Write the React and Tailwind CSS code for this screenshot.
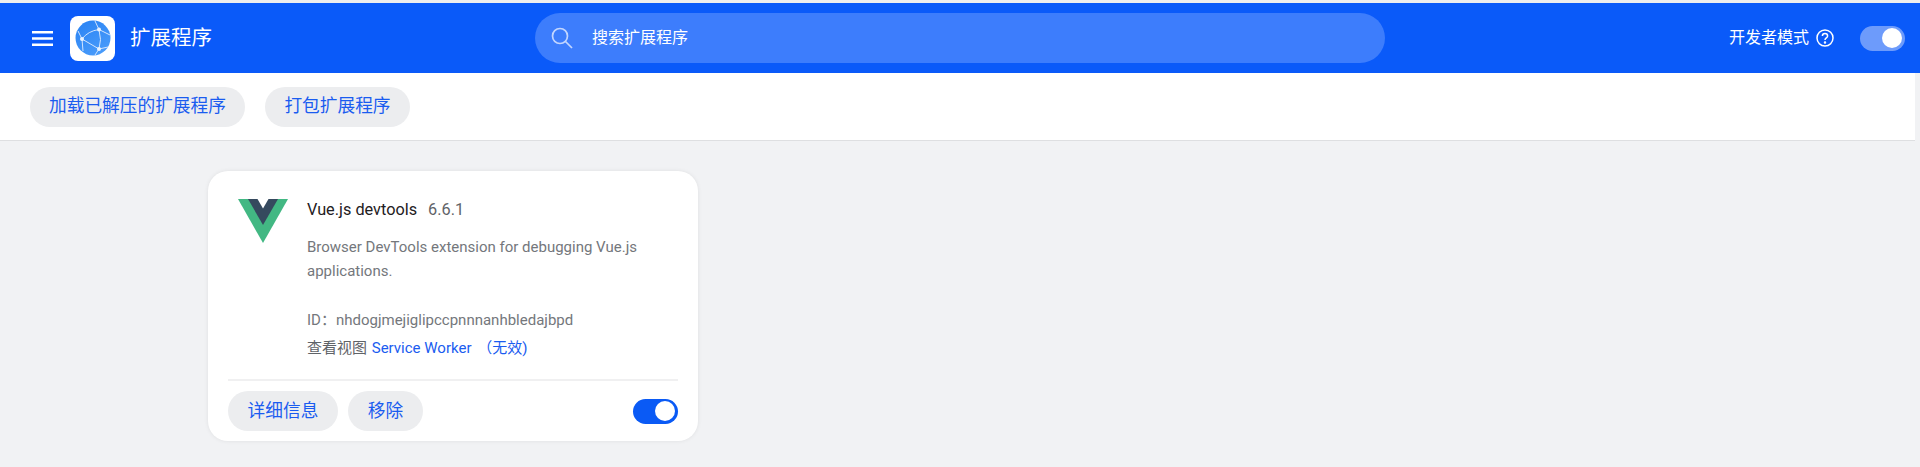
import React from "react";

function Toggle({ dev }) {
  return (
    <div className={`flex h-[25px] w-[45px] items-center justify-end rounded-full pr-[3px] ${dev ? "bg-[#6d9bfb]" : "bg-[#0a5af5]"}`}>
      <div className="h-[20px] w-[20px] rounded-full bg-white" />
    </div>
  );
}

function Pill({ children, className = "" }) {
  return (
    <button className={`flex h-10 items-center justify-center rounded-full bg-[#ecedef] text-[17.7px] text-[#1a5cf0] ${className}`}>
      {children}
    </button>
  );
}

function GlobeLogo() {
  return (
    <div className="flex h-[45px] w-[45px] items-center justify-center rounded-[8px] bg-white">
      <svg width="36" height="36" viewBox="0 0 36 36">
        <defs>
          <linearGradient id="globe" x1="0.2" y1="0" x2="0.8" y2="1">
            <stop offset="0" stopColor="#2b84f4" />
            <stop offset="1" stopColor="#4b9dfb" />
          </linearGradient>
        </defs>
        <circle cx="18" cy="18" r="17.5" fill="url(#globe)" />
        <path d="M7 19 Q13 11 24 9.5 M24 9.5 Q27 20 24 29 M7 19 L24 29 M24 9.5 L20 1 M24 9.5 L35 15 M24 29 L20 35 M24 29 L33 27 M7 19 L3 11 M7 19 L8 31" stroke="#d3e5fd" strokeWidth="1" fill="none" />
        <circle cx="7" cy="19" r="2" fill="#e8f2fe" />
        <circle cx="24" cy="29" r="2" fill="#e8f2fe" />
        <circle cx="24" cy="9.5" r="2" fill="#e8f2fe" />
      </svg>
    </div>
  );
}

export default function App() {
  return (
    <div className="flex h-[467px] flex-col overflow-hidden bg-[#f1f2f4] font-['Roboto','Noto_Sans_CJK_SC',sans-serif]">
      <div className="h-[3px] bg-[#eeeeee]" />
      <header className="flex h-[70px] items-center bg-[#0a5af9] text-white">
        <div className="flex w-[535px] items-center">
          <svg className="ml-[32px]" width="21" height="15" viewBox="0 0 21 15">
            <path d="M0 1.2h21M0 7.5h21M0 13.8h21" stroke="#fff" strokeWidth="2.4" />
          </svg>
          <div className="ml-[17px]"><GlobeLogo /></div>
          <span className="ml-[15px] text-[20.5px]">扩展程序</span>
        </div>
        <div className="flex h-[50px] w-[850px] items-center rounded-full bg-[#3d7dfc]">
          <svg className="ml-[16px]" width="22" height="22" viewBox="0 0 22 22" fill="none" stroke="#c3d6fe" strokeWidth="1.7">
            <circle cx="9" cy="9" r="7.5" />
            <path d="M14.5 14.5L21 21" />
          </svg>
          <span className="ml-[19px] text-[16px]">搜索扩展程序</span>
        </div>
        <div className="ml-auto flex items-center">
          <span className="text-[16px]">开发者模式</span>
          <svg className="ml-[7px]" width="18" height="18" viewBox="0 0 18 18" fill="none" stroke="#fff" strokeWidth="1.5">
            <circle cx="9" cy="9" r="8" />
            <path d="M6.4 7.1c0-1.5 1.2-2.5 2.6-2.5s2.6 1 2.6 2.3c0 2-2.6 2-2.6 4.2" />
            <circle cx="9" cy="13.6" r="0.5" fill="#fff" />
          </svg>
          <div className="mr-[15px] ml-[26px]"><Toggle dev /></div>
        </div>
      </header>
      <div className="mr-[5px] flex h-[68px] items-center gap-5 border-b border-[#dedfe1] bg-white pl-[30px]">
        <Pill className="w-[215px]">加载已解压的扩展程序</Pill>
        <Pill className="w-[145px]">打包扩展程序</Pill>
      </div>
      <main className="pt-[30px] pl-[208px]">
        <div className="flex h-[270px] w-[490px] flex-col rounded-[20px] bg-white px-5 shadow-[0_0_4px_rgba(0,0,0,0.08)]">
          <div className="flex flex-1">
            <svg className="mt-[28px] ml-[10px]" width="50" height="44" viewBox="0 0 50 44">
              <path d="M0 0H50L25 44Z" fill="#42b883" />
              <path d="M10 0H40L25 26Z" fill="#35495e" />
              <path d="M19.5 0H30.5L25 9.5Z" fill="#fff" />
            </svg>
            <div className="ml-[19px] flex-1">
              <div className="mt-[28px] flex items-center text-[16.3px] leading-[22px]">
                <span className="text-[#1f2023]">Vue.js devtools</span>
                <span className="ml-[11px] text-[#5f6368]">6.6.1</span>
              </div>
              <p className="mt-[14px] text-[15px] leading-[24px] text-[#74777c]">
                Browser DevTools extension for debugging Vue.js applications.
              </p>
              <div className="mt-[25px] text-[15px] leading-[24px] text-[#74777c]">ID：nhdogjmejiglipccpnnnanhbledajbpd</div>
              <div className="mt-[4px] text-[15px] leading-[24px] text-[#5f6368]">
                查看视图 <span className="ml-[1px] text-[#1a5cf0]">Service Worker <span className="ml-[2px]">（无效)</span></span>
              </div>
            </div>
          </div>
          <div className="h-[2px] bg-[#f0f0f1]" />
          <div className="flex h-[60px] items-center">
            <Pill className="w-[110px]">详细信息</Pill>
            <Pill className="ml-[10px] w-[75px]">移除</Pill>
            <div className="ml-auto"><Toggle /></div>
          </div>
        </div>
      </main>
    </div>
  );
}
